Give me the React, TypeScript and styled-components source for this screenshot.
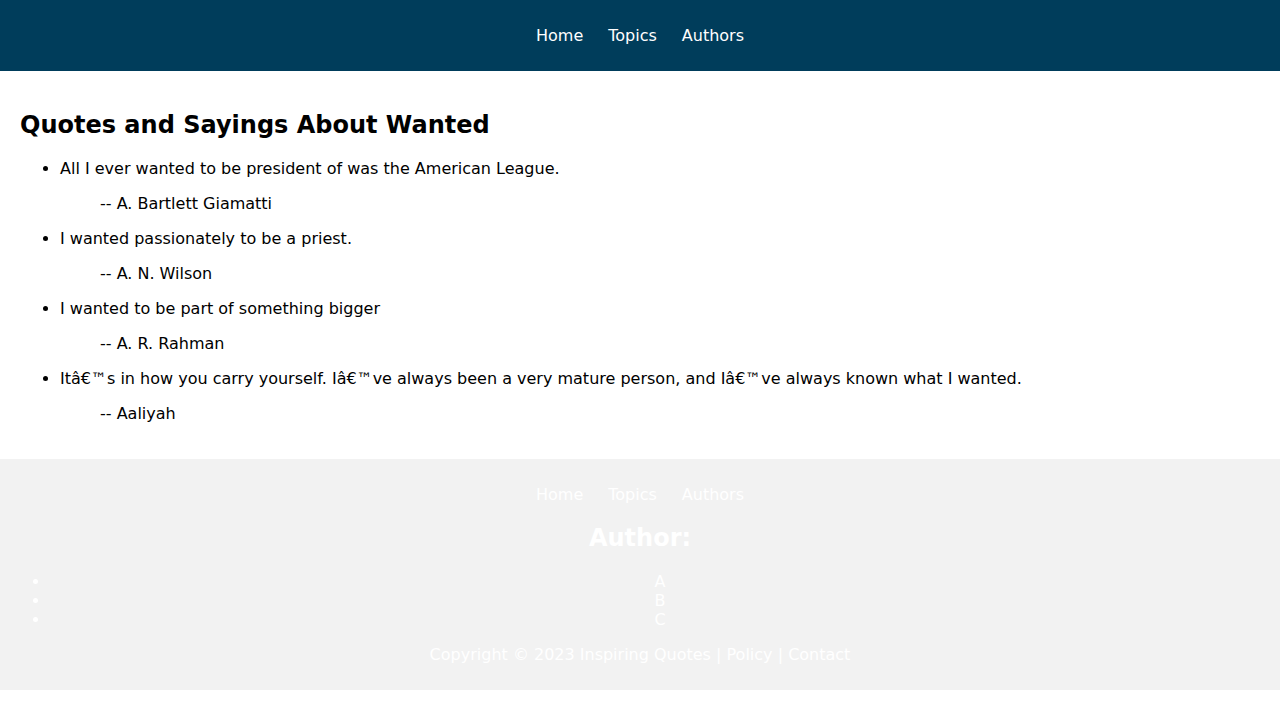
import React from "react";
import styled, { createGlobalStyle } from "styled-components";

const GlobalStyle = createGlobalStyle`
  html, body {
    margin: 0;
    padding: 0;
    background: #ffffff;
    font-family: "DejaVu Sans", Verdana, sans-serif;
    font-size: 16px;
    color: #000000;
  }
`;

const Header = styled.header`
  background: #003d5b;
  padding: 10px;
`;

const NavList = styled.ul`
  list-style: none;
  margin: 16px 0;
  padding: 0;
  display: flex;
  justify-content: center;
  gap: 25px;
`;

const NavLink = styled.a`
  color: #ffffff;
  text-decoration: none;
`;

const Main = styled.main`
  padding: 20px;
`;

const Title = styled.h2`
  font-size: 24px;
  font-weight: bold;
  margin: 19.92px 0;
`;

const QuoteList = styled.ul`
  margin: 16px 0;
  padding-left: 40px;
  list-style: disc;
`;

const QuoteText = styled.li``;

const AuthorLine = styled.p`
  margin: 16px 0;
  padding-left: 40px;
`;

const Footer = styled.footer`
  background: #f2f2f2;
  padding: 10px;
  color: #ffffff;
  text-align: center;
`;

const FooterTitle = styled.h2`
  font-size: 24px;
  font-weight: bold;
  margin: 19.92px 0;
  color: #ffffff;
`;

const LetterList = styled.ul`
  margin: 16px 0;
  padding-left: 40px;
  list-style: disc;
  text-align: center;
`;

const Copy = styled.p`
  margin: 16px 0;
`;

const FooterLink = styled.a`
  color: #ffffff;
  text-decoration: none;
`;

const quotes = [
  { text: "All I ever wanted to be president of was the American League.", author: "A. Bartlett Giamatti" },
  { text: "I wanted passionately to be a priest.", author: "A. N. Wilson" },
  { text: "I wanted to be part of something bigger", author: "A. R. Rahman" },
  {
    text: "It\u00e2\u20ac\u2122s in how you carry yourself. I\u00e2\u20ac\u2122ve always been a very mature person, and I\u00e2\u20ac\u2122ve always known what I wanted.",
    author: "Aaliyah",
  },
];

const navItems = ["Home", "Topics", "Authors"];

const Nav = () => (
  <nav>
    <NavList>
      {navItems.map((n) => (
        <li key={n}>
          <NavLink href="#">{n}</NavLink>
        </li>
      ))}
    </NavList>
  </nav>
);

export default function App() {
  return (
    <>
      <GlobalStyle />
      <Header>
        <Nav />
      </Header>
      <Main>
        <Title>Quotes and Sayings About Wanted</Title>
        <QuoteList>
          {quotes.map((q) => (
            <QuoteText key={q.author}>
              {q.text}
              <AuthorLine>-- {q.author}</AuthorLine>
            </QuoteText>
          ))}
        </QuoteList>
      </Main>
      <Footer>
        <Nav />
        <FooterTitle>Author:</FooterTitle>
        <LetterList>
          {["A", "B", "C"].map((l) => (
            <li key={l}>
              <FooterLink href="#">{l}</FooterLink>
            </li>
          ))}
        </LetterList>
        <Copy>
          Copyright © 2023 <FooterLink href="#">Inspiring Quotes</FooterLink> |{" "}
          <FooterLink href="#">Policy</FooterLink> | <FooterLink href="#">Contact</FooterLink>
        </Copy>
      </Footer>
    </>
  );
}
